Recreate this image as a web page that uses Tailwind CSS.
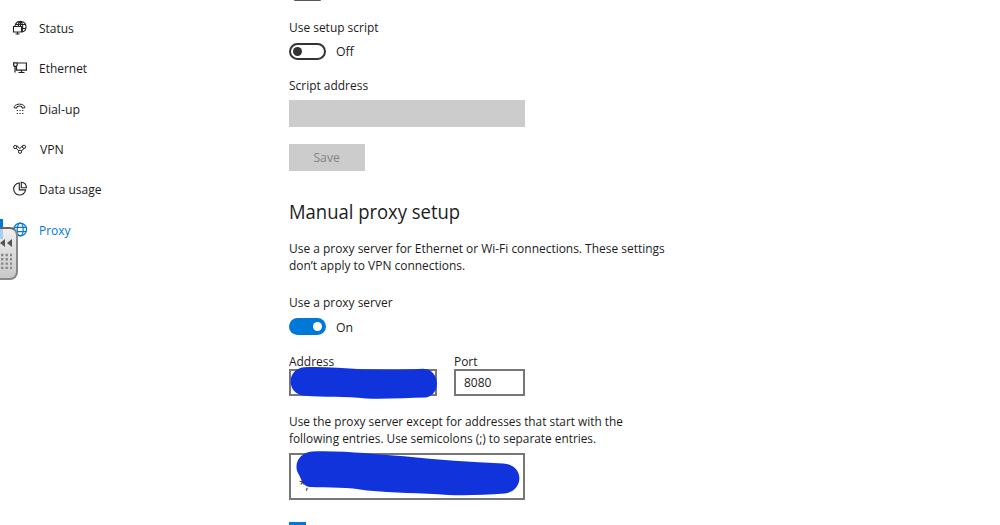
<!DOCTYPE html>
<html lang="en">

<head>
    <meta charset="UTF-8">
    <title>Proxy settings</title>
    <script src="https://cdn.jsdelivr.net/npm/@tailwindcss/browser@4"></script>
</head>

<body class="bg-white text-[#1c1c1c] font-['Open_Sans','Noto_Sans',sans-serif] text-[13.5px] overflow-hidden">
    <div class="relative flex h-[525px] overflow-hidden">
        <!-- Sidebar -->
        <nav class="w-[289px] shrink-0 pt-2 pl-3">
            <a class="flex items-center h-[40.3px] gap-[11px]">
                <svg class="w-4 h-4 shrink-0" viewBox="0 0 16 16" fill="none" stroke="#222" stroke-width="1.1">
                    <path d="M3 6C4.5 -.5 14 0 14 7C14 9.8 12.3 11.5 10 12M3.8 4.5H13.4M10 8.5H13.8M6.3 6C6.3 3.8 7 2.2 8.5 1.3C10.8 3 11.4 7.5 10 11.5M8.5 1.3V6" />
                    <path d="M1.5 6.5H9.5V12H1.5ZM5.5 12V14M3.5 14H7.5" fill="#fff" />
                </svg>
                <span class="origin-left scale-x-[.885]">Status</span>
            </a>
            <a class="flex items-center h-[40.3px] gap-[11px]">
                <svg class="w-4 h-4 shrink-0" viewBox="0 0 16 16" fill="none" stroke="#222" stroke-width="1.2">
                    <path d="M5.5 3H14.4V10.2H4.5V7M9.5 10.2V12.5M6.5 12.5H12.5M3 7V12.5" />
                    <path d="M1.6 2.8H5.2V5.2L4.4 6.4H2.4L1.6 5.2Z" />
                </svg>
                <span class="origin-left scale-x-[.885]">Ethernet</span>
            </a>
            <a class="flex items-center h-[40.3px] gap-[11px]">
                <svg class="w-4 h-4 shrink-0" viewBox="0 0 16 16" fill="none" stroke="#222">
                    <path d="M2.2 6.8C1.8 1.9 13.2 1.9 12.8 6.8L10 7.1V5.6C8.8 5 6.2 5 5 5.6V7.1Z" />
                    <path stroke-dasharray="1.2 1.5" d="M4.8 9.5H11.4M4.8 12.5H11.4" />
                </svg>
                <span class="origin-left scale-x-[.91]">Dial-up</span>
            </a>
            <a class="flex items-center h-[40.3px] gap-[11px]">
                <svg class="w-4 h-4 shrink-0" viewBox="0 0 16 16" fill="none" stroke="#222">
                    <circle cx="3.2" cy="6" r="1.6" />
                    <circle cx="12" cy="5.8" r="1.6" />
                    <circle cx="8" cy="10.8" r="1.6" />
                    <path d="M4.4 4.8C6.4 4.4 6.3 7.6 7.8 7.4S9.3 4.8 10.8 4.9M4.3 7.4L6.8 9.8M9.4 10C9.6 8.4 11.6 9.3 12 7.4" />
                </svg>
                <span class="pl-px origin-left scale-x-[.91]">VPN</span>
            </a>
            <a class="flex items-center h-[40.3px] gap-[11px]">
                <svg class="w-4 h-4 shrink-0" viewBox="0 0 16 16" fill="none" stroke="#222" stroke-width="1.1">
                    <path d="M7.3 2A6 6 0 1 0 13.6 8.9H7.3Z" />
                    <path d="M9.3 1.2V6.8H14.4C14.4 3.8 12.5 1.5 9.3 1.2Z" />
                </svg>
                <span class="origin-left scale-x-[.89]">Data usage</span>
            </a>
            <a class="flex items-center h-[40.3px] gap-[11px] text-[#0078d7]">
                <svg class="w-4 h-4 shrink-0" viewBox="0 0 16 16" fill="none" stroke="#0078d7" stroke-width="1.2">
                    <circle cx="8.2" cy="7.5" r="6.4" />
                    <ellipse cx="8.2" cy="7.5" rx="3" ry="6.4" />
                    <path d="M2.4 5.3H14M2.4 9.7H14" />
                </svg>
                <span class="origin-left scale-x-[.885]">Proxy</span>
            </a>
        </nav>

        <!-- Settings -->
        <main class="w-[400px] shrink-0">
            <div class="ml-[5px] w-[27px] h-px bg-[#555] rounded-b-full"></div>
            <div class="h-[17px] leading-[17px] mt-[18px] origin-left scale-x-[.885]">Use setup script</div>
            <div class="flex items-center mt-[7px] h-[17px] gap-2.5">
                <div class="w-[37px] h-[17px] rounded-full border-2 border-[#333] flex items-center pl-0.5">
                    <div class="w-[9px] h-[9px] rounded-full bg-[#333]"></div>
                </div>
                <span class="origin-left scale-x-[.91]">Off</span>
            </div>
            <div class="h-[17px] leading-[17px] mt-[17px] origin-left scale-x-[.885]">Script address</div>
            <div class="w-[236px] h-[27px] mt-[6px] bg-[#ccc]"></div>
            <div class="w-[76px] h-[27px] mt-[17px] bg-[#ccc] text-[#848484] flex items-center justify-center">
                <span class="scale-x-[.9]">Save</span>
            </div>

            <h2 class="h-[26px] leading-[26px] mt-[27px] text-[20.5px] origin-left scale-x-[.9]">Manual proxy setup</h2>
            <p class="mt-[16px] leading-[17px] whitespace-nowrap origin-left scale-x-[.885]">Use a proxy server for Ethernet or Wi-Fi connections. These settings<br>don’t apply to VPN connections.</p>

            <div class="h-[17px] leading-[17px] mt-[20px] origin-left scale-x-[.885]">Use a proxy server</div>
            <div class="flex items-center mt-[7px] h-[17px] gap-2.5">
                <div class="w-[37px] h-[17px] rounded-full bg-[#0078d7] flex items-center justify-end pr-1">
                    <div class="w-[9px] h-[9px] rounded-full bg-white"></div>
                </div>
                <span class="pt-px origin-left scale-x-[.91]">On</span>
            </div>

            <div class="flex gap-[17px] mt-[17px]">
                <div class="w-[148px]">
                    <div class="h-[17px] leading-[18px] origin-left scale-x-[.885]">Address</div>
                    <div class="relative h-[27px] border-2 border-[#777]">
                        <svg class="absolute -left-0.5 -top-1 w-[150px] h-[34px]" viewBox="0 0 150 34">
                            <path fill="#1033dc" d="M15 0.3C35 -0.5 53 1.5 73 2.3C93 3 115 3 134 1.7C151 2 153 27 137 30.5C118 30.5 99 32.5 77 31.5C56 29 35 30.5 16 28.7C-3 28 -3 2 15 0.3Z" />
                        </svg>
                    </div>
                </div>
                <div class="w-[71px]">
                    <div class="h-[17px] leading-[18px] origin-left scale-x-[.885]">Port</div>
                    <div class="h-[27px] border-2 border-[#777] pl-2 leading-[22px]">
                        <div class="origin-left scale-x-[.89]">8080</div>
                    </div>
                </div>
            </div>

            <p class="mt-[17px] leading-[17px] whitespace-nowrap origin-left scale-x-[.877]">Use the proxy server except for addresses that start with the<br>following entries. Use semicolons (;) to separate entries.</p>
            <div class="relative w-[236px] h-[47px] mt-[6px] border-2 border-[#777] pt-[21px] pl-2 leading-[17px]">
                <div class="origin-left scale-x-[.885]">*;</div>
                <svg class="absolute left-1 -top-1 w-[228px] h-[46px]" viewBox="0 0 228 46">
                    <path fill="#1033dc" d="M17 0.5C52 -0.5 78 3.5 109 5.2C143 9 176 11 208 12.5C229 13 230 39 210 42.5C190 44 172 44.5 153 44C126 42 98 42 72 39.5C54 36 34 37 15 36C8 36 6 27 3 22C-2 12 6 1 17 0.5Z" />
                </svg>
            </div>
            <div class="w-[17px] h-[17px] mt-[22px] bg-[#0078d7]"></div>
        </main>

        <!-- Collapsed side panel handle -->
        <div class="absolute left-0 top-[219px] w-[3px] h-[20px] bg-[#0078d7]"></div>
        <div class="absolute -left-2 top-[227px] w-[26px] h-[53px] rounded-lg border-2 border-[#888] border-t-[#666] bg-linear-to-b from-[#eee]/90 to-[#c8c8c8]">
            <svg class="absolute left-1.5 top-0 w-[18px] h-[49px]" viewBox="0 0 18 49">
                <path fill="#a6d0ef" d="M0 0H3V10H0Z" />
                <path fill="#555" d="M5 10V18L0 14ZM12 10V18L7 14Z" />
                <path stroke="#888" stroke-width="2.4" stroke-dasharray="2.4 2.1" d="M1 26H12M1 30.3H12M1 34.6H12M1 38.9H12" />
            </svg>
        </div>
    </div>
</body>

</html>
